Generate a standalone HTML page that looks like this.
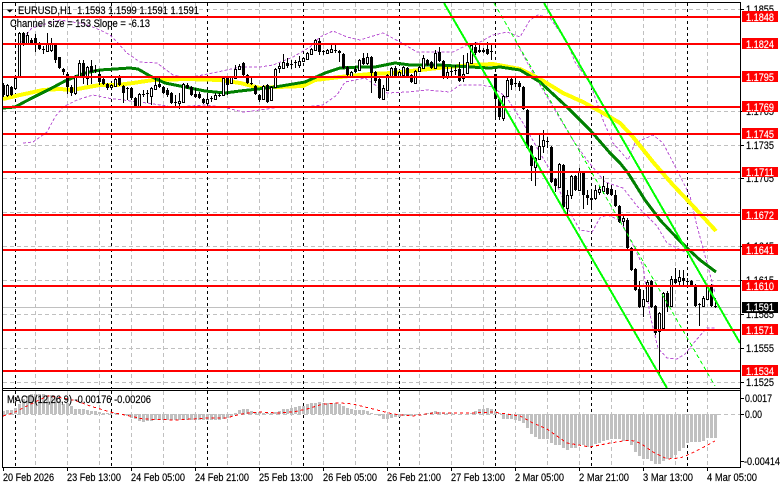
<!DOCTYPE html>
<html><head><meta charset="utf-8"><title>EURUSD,H1</title>
<style>
html,body{margin:0;padding:0;background:#fff;width:781px;height:489px;overflow:hidden}
svg{display:block;font-family:"Liberation Sans",sans-serif}
text{font-size:11px;fill:#000;stroke:#000;stroke-width:.18px}
.w text{fill:#fff;stroke:#fff}
</style></head><body>
<svg width="781" height="489" viewBox="0 0 781 489" xmlns="http://www.w3.org/2000/svg">
<rect width="781" height="489" fill="#fff"/>
<!-- grid -->
<path fill="none" stroke="#c0c0c0" stroke-width="1" stroke-dasharray="4 3" d="M3 9.5H740M3 43.5H740M3 77.5H740M3 111.5H740M3 145.5H740M3 178.5H740M3 212.5H740M3 246.5H740M3 280.5H740M3 314.5H740M3 348.5H740M3 382.5H740M3 414.5H740
M35.5 3V388M67.5 3V388M99.5 3V388M131.5 3V388M163.5 3V388M195.5 3V388M227.5 3V388M259.5 3V388M291.5 3V388M323.5 3V388M355.5 3V388M387.5 3V388M419.5 3V388M451.5 3V388M483.5 3V388M515.5 3V388M547.5 3V388M579.5 3V388M611.5 3V388M643.5 3V388M675.5 3V388M707.5 3V388
M35.5 391V468M67.5 391V468M99.5 391V468M131.5 391V468M163.5 391V468M195.5 391V468M227.5 391V468M259.5 391V468M291.5 391V468M323.5 391V468M355.5 391V468M387.5 391V468M419.5 391V468M451.5 391V468M483.5 391V468M515.5 391V468M547.5 391V468M579.5 391V468M611.5 391V468M643.5 391V468M675.5 391V468M707.5 391V468"/>
<path fill="none" stroke="#000" stroke-width="1" stroke-dasharray="3 3" d="M15.5 3V388M111.5 3V388M207.5 3V388M303.5 3V388M399.5 3V388M495.5 3V388M591.5 3V388M687.5 3V388M15.5 391V468M111.5 391V468M207.5 391V468M303.5 391V468M399.5 391V468M495.5 391V468M591.5 391V468M687.5 391V468"/>
<line x1="3" y1="307.5" x2="740" y2="307.5" stroke="#c0c0c0"/>
<!-- envelopes -->
<g fill="none" stroke="#ba55d3" stroke-width="1" stroke-dasharray="3 2" shape-rendering="crispEdges">
<path d="M18 52L24 37L32 28L45 24L60 20L85 24L100 30L110 35L117 42L127 53L140 62L157 63L173 75L187 78L213 73L240 67L260 67L273 65L293 57L310 47L320 37L333 31L347 37L360 40L383 33L400 42L417 52L433 52L453 52L467 45L480 42L493 35L507 32L520 37L530 20L538 15L550 18L567 42L575 62L590 83L603 120L613 143L628 160L635 143L653 135L663 143L677 170L690 196L697 226L707 263L715 293"/>
<path d="M23 143L33 142L47 132L55 117L63 107L77 100L93 95L107 98L123 100L147 103L173 107L207 105L227 108L243 112L260 110L280 107L303 107L323 105L337 95L345 82L365 78L387 93L407 92L427 90L450 92L460 85L480 85L493 87L507 98L523 123L540 153L550 170L567 207L580 230L592 232L600 218L607 215L620 220L633 245L643 266L650 315L658 348L667 358L677 359L685 354L697 339L707 328L715 328"/>
<path d="M515 40L533 73L553 107L573 140L587 160L605 182L623 188L637 206L657 226L667 243L685 252"/>
</g>
<!-- moving averages -->
<path fill="none" stroke="#ffff00" stroke-width="4" stroke-linejoin="round" shape-rendering="crispEdges" d="M3 99L20 95L43 90L60 89L72 90L83 88L100 85L117 85L133 83L153 80L187 79L220 80L240 83L260 88L277 87L303 86L315 80L340 77L370 74L393 73L420 70L447 67L473 65L493 64L520 69L540 79L563 93L583 102L603 113L620 123L633 137L653 162L673 185L693 206L716 231"/>
<path fill="none" stroke="#008000" stroke-width="3" stroke-linejoin="round" shape-rendering="crispEdges" d="M3 108L15 107L30 99L50 89L65 81L85 73L100 70L130 68L138 69L150 76L165 83L185 87L205 91L225 93L240 91L258 89L275 87L305 82L325 73L340 68L360 67L375 67L395 63L410 65L440 65L470 67L490 68L500 67L520 70L540 82L567 107L590 130L610 153L620 163L628 173L645 200L660 220L677 238L687 248L700 260L716 272"/>
<!-- wicks -->
<path fill="none" stroke="#000" stroke-width="1" d="M3.5 83V97M7.5 84V97M11.5 86V96M15.5 75V89M19.5 32V78M23.5 32V46M27.5 32V45M31.5 38V44M35.5 34V52M39.5 42V50M43.5 46V54M47.5 33V52M51.5 38V52M55.5 44V63M59.5 57V69M63.5 68V75M67.5 72V94M71.5 85V96M75.5 75V95M79.5 60V77M83.5 60V84M87.5 66V85M91.5 60V84M95.5 65V73M99.5 70V85M103.5 78V85M107.5 83V90M111.5 84V89M115.5 76V87M119.5 75V86M123.5 85V103M127.5 87V100M131.5 87V100M135.5 97V108M139.5 93V108M143.5 90V97M147.5 90V103M151.5 87V105M155.5 78V90M159.5 78V88M163.5 86V94M167.5 88V97M171.5 92V104M175.5 95V107M179.5 93V109M183.5 83V103M187.5 83V89M191.5 86V96M195.5 88V98M199.5 92V99M203.5 98V104M207.5 96V105M211.5 96V102M215.5 93V100M219.5 93V97M223.5 77V96M227.5 76V95M231.5 76V84M235.5 65V79M239.5 64V70M243.5 62V76M247.5 74V84M251.5 78V85M255.5 85V95M259.5 94V102M263.5 85V100M267.5 84V103M271.5 86V101M275.5 68V88M279.5 63V73M283.5 54V69M287.5 58V68M291.5 60V69M295.5 60V68M299.5 56V68M303.5 57V62M307.5 52V60M311.5 48V55M315.5 39V51M319.5 38V55M323.5 50V55M327.5 49V54M331.5 45V53M335.5 45V53M339.5 50V62M343.5 53V69M347.5 66V76M351.5 71V78M355.5 66V73M359.5 59V71M363.5 53V65M367.5 53V65M371.5 56V93M375.5 71V83M379.5 78V99M383.5 85V100M387.5 74V91M391.5 67V77M395.5 66V77M399.5 71V78M403.5 66V76M407.5 67V78M411.5 74V83M415.5 70V84M419.5 66V72M423.5 55V69M427.5 59V66M431.5 61V69M435.5 50V69M439.5 47V62M443.5 60V79M447.5 67V79M451.5 67V78M455.5 65V75M459.5 62V82M463.5 55V82M467.5 53V74M471.5 43V64M475.5 42V55M479.5 44V53M483.5 48V53M487.5 42V55M491.5 45V60M495.5 74V119M499.5 98V120M503.5 95V121M507.5 78V97M511.5 77V90M515.5 77V87M519.5 81V91M523.5 86V110M527.5 109V149M531.5 145V181M535.5 157V186M539.5 135V160M543.5 130V153M547.5 137V148M551.5 146V183M555.5 178V192M559.5 163V188M563.5 164V208M567.5 190V215M571.5 175V199M575.5 175V191M579.5 168V191M583.5 171V209M587.5 190V205M591.5 190V210M595.5 185V200M599.5 186V195M603.5 176V194M607.5 183V195M611.5 185V196M615.5 190V207M619.5 205V223M623.5 216V226M627.5 218V249M631.5 247V271M635.5 268V291M639.5 281V308M643.5 290V317M647.5 280V302M651.5 280V308M655.5 305V335M659.5 312V375M663.5 292V329M667.5 291V312M671.5 276V307M675.5 268V284M679.5 270V287M683.5 270V287M687.5 278V286M691.5 280V287M695.5 284V307M699.5 303V326M703.5 296V307M707.5 285V300M711.5 284V307M715.5 298V308"/>
<!-- black bodies -->
<path fill="none" stroke="#000" stroke-width="3" d="M3.5 85V95M11.5 87V95M23.5 33V45M31.5 40V43M35.5 38V45M39.5 44V49M43.5 49V50M55.5 45V60M59.5 57V68M63.5 69V72M67.5 74V87M71.5 87V93M83.5 63V78M91.5 66V72M95.5 70V71M99.5 74V82M103.5 79V84M107.5 84V88M119.5 77V85M123.5 86V93M127.5 88V89M131.5 88V98M135.5 98V107M143.5 94V95M147.5 93V94M159.5 84V87M163.5 87V93M167.5 90V95M171.5 93V103M175.5 102V103M187.5 85V88M191.5 87V95M195.5 94V97M199.5 94V98M203.5 99V103M211.5 98V99M219.5 95V96M227.5 78V85M243.5 63V75M247.5 75V83M251.5 83V84M255.5 86V94M259.5 95V100M267.5 85V102M287.5 63V66M291.5 64V65M295.5 62V63M319.5 41V52M323.5 51V52M335.5 50V51M339.5 51V53M343.5 54V68M347.5 67V75M355.5 69V72M363.5 58V64M371.5 57V73M375.5 72V81M379.5 79V98M395.5 68V76M407.5 68V77M411.5 75V82M427.5 60V65M431.5 62V68M439.5 52V61M443.5 61V78M451.5 71V72M455.5 70V71M459.5 69V81M475.5 47V53M479.5 50V52M483.5 50V52M487.5 49V54M491.5 51V52M495.5 74V99M499.5 99V117M511.5 79V85M515.5 83V84M519.5 83V87M523.5 87V109M527.5 110V148M531.5 146V166M547.5 141V142M551.5 147V182M555.5 179V186M563.5 165V207M575.5 176V190M583.5 172V195M587.5 195V198M591.5 198V200M607.5 188V194M611.5 189V195M615.5 195V206M619.5 206V222M627.5 220V248M631.5 248V270M635.5 269V290M639.5 289V307M651.5 281V307M655.5 306V333M667.5 293V307M675.5 279V283M683.5 278V281M687.5 281V282M691.5 281V285M695.5 285V306M699.5 304V305M711.5 286V306M715.5 306V307"/>
<!-- white bodies -->
<path fill="#fff" stroke="#000" stroke-width="1" d="M6.5 85.5h2v10h-2zM14.5 78.5h2v10h-2zM18.5 33.5h2v44h-2zM26.5 35.5h2v8h-2zM46.5 43.5h2v8h-2zM50.5 43.5h2v7h-2zM74.5 76.5h2v17h-2zM78.5 63.5h2v14h-2zM86.5 67.5h2v11h-2zM110.5 85.5h2v2h-2zM114.5 79.5h2v7h-2zM138.5 94.5h2v13h-2zM150.5 88.5h2v8h-2zM154.5 85.5h2v4h-2zM178.5 101.5h2v2h-2zM182.5 84.5h2v18h-2zM206.5 99.5h2v4h-2zM214.5 95.5h2v4h-2zM222.5 78.5h2v17h-2zM230.5 77.5h2v6h-2zM234.5 69.5h2v9h-2zM238.5 66.5h2v3h-2zM262.5 86.5h2v13h-2zM270.5 87.5h2v13h-2zM274.5 69.5h2v18h-2zM278.5 66.5h2v2h-2zM282.5 62.5h2v6h-2zM298.5 61.5h2v4h-2zM302.5 58.5h2v3h-2zM306.5 53.5h2v6h-2zM310.5 49.5h2v5h-2zM314.5 40.5h2v10h-2zM326.5 50.5h2v3h-2zM330.5 49.5h2v3h-2zM350.5 72.5h2v4h-2zM358.5 60.5h2v10h-2zM366.5 57.5h2v6h-2zM382.5 88.5h2v11h-2zM386.5 75.5h2v15h-2zM390.5 68.5h2v8h-2zM398.5 72.5h2v5h-2zM402.5 67.5h2v8h-2zM414.5 71.5h2v12h-2zM418.5 67.5h2v4h-2zM422.5 58.5h2v10h-2zM434.5 53.5h2v15h-2zM446.5 72.5h2v4h-2zM462.5 74.5h2v4h-2zM466.5 62.5h2v11h-2zM470.5 45.5h2v18h-2zM502.5 96.5h2v22h-2zM506.5 80.5h2v16h-2zM534.5 158.5h2v9h-2zM538.5 146.5h2v13h-2zM542.5 140.5h2v6h-2zM558.5 164.5h2v23h-2zM566.5 195.5h2v13h-2zM570.5 176.5h2v19h-2zM578.5 172.5h2v18h-2zM594.5 190.5h2v8h-2zM598.5 189.5h2v3h-2zM602.5 186.5h2v5h-2zM622.5 218.5h2v3h-2zM642.5 299.5h2v7h-2zM646.5 282.5h2v19h-2zM658.5 313.5h2v18h-2zM662.5 293.5h2v35h-2zM670.5 279.5h2v27h-2zM678.5 277.5h2v4h-2zM702.5 298.5h2v8h-2zM706.5 287.5h2v12h-2z"/>
<!-- channel -->
<path fill="none" stroke="#00ff00" stroke-width="2" shape-rendering="crispEdges" d="M444 3L667 388M544 3L740 343"/>
<path fill="none" stroke="#00ff00" stroke-width="1" stroke-dasharray="4 3" shape-rendering="crispEdges" d="M494 3L715 386"/>
<!-- levels -->
<path fill="none" stroke="#ff0000" stroke-width="2" d="M3 17H741M3 44H741M3 77H741M3 107H741M3 134H741M3 172H741M3 215H741M3 250H741M3 286H741M3 330H741M3 371H741"/>
<!-- macd histogram -->
<path fill="none" stroke="#c0c0c0" stroke-width="3" d="M3.5 411V414M7.5 410V414M11.5 410V414M15.5 408V414M19.5 404V414M23.5 399V414M27.5 396V414M31.5 394V414M35.5 394V414M39.5 394V414M43.5 394V414M47.5 395V414M51.5 395V414M55.5 398V414M59.5 401V414M63.5 404V414M67.5 403V414M71.5 406V414M75.5 409V414M79.5 409V414M83.5 409V414M87.5 410V414M91.5 411V414M95.5 411V414M99.5 412V414M103.5 413V414M107.5 413V414M111.5 413V414M115.5 413V414M123.5 414V415M127.5 414V416M131.5 414V418M135.5 414V419M139.5 414V421M143.5 414V422M147.5 414V421M151.5 414V421M155.5 414V420M159.5 414V420M163.5 414V420M167.5 414V420M171.5 414V420M175.5 414V420M179.5 414V420M183.5 414V420M187.5 414V420M191.5 414V420M195.5 414V420M199.5 414V420M203.5 414V420M207.5 414V420M211.5 414V420M215.5 414V420M219.5 414V420M223.5 414V419M227.5 414V418M231.5 414V416M235.5 413V414M239.5 410V414M243.5 409V414M247.5 409V414M251.5 411V414M255.5 412V414M259.5 412V414M263.5 413V414M267.5 413V414M271.5 413V414M275.5 412V414M279.5 411V414M283.5 409V414M287.5 409V414M291.5 408V414M295.5 407V414M299.5 406V414M303.5 406V414M307.5 404V414M311.5 403V414M315.5 403V414M319.5 402V414M323.5 403V414M327.5 403V414M331.5 403V414M335.5 403V414M339.5 404V414M343.5 406V414M347.5 408V414M351.5 409V414M355.5 410V414M359.5 410V414M363.5 410V414M367.5 411V414M371.5 413V414M379.5 414V416M383.5 414V419M387.5 414V419M391.5 414V418M395.5 414V417M399.5 414V417M403.5 414V416M407.5 414V415M411.5 414V416M415.5 414V415M419.5 414V415M427.5 413V414M431.5 412V414M435.5 411V414M439.5 412V414M443.5 413V414M447.5 413V414M451.5 413V414M471.5 413V414M475.5 411V414M479.5 409V414M483.5 409V414M487.5 408V414M491.5 409V414M495.5 411V414M499.5 413V414M503.5 414V419M507.5 414V419M511.5 414V419M515.5 414V420M519.5 414V421M523.5 414V423M527.5 414V428M531.5 414V434M535.5 414V437M539.5 414V439M543.5 414V439M547.5 414V439M551.5 414V443M555.5 414V445M559.5 414V445M563.5 414V448M567.5 414V450M571.5 414V448M575.5 414V448M579.5 414V445M583.5 414V445M587.5 414V447M591.5 414V447M595.5 414V444M599.5 414V443M603.5 414V441M607.5 414V440M611.5 414V439M615.5 414V439M619.5 414V439M623.5 414V441M627.5 414V441M631.5 414V445M635.5 414V452M639.5 414V456M643.5 414V459M647.5 414V459M651.5 414V461M655.5 414V464M659.5 414V464M663.5 414V461M667.5 414V459M671.5 414V458M675.5 414V455M679.5 414V451M683.5 414V448M687.5 414V443M691.5 414V442M695.5 414V442M699.5 414V442M703.5 414V441M707.5 414V438M711.5 414V438M715.5 414V438"/>
<path fill="none" stroke="#ff0000" stroke-width="1" stroke-dasharray="3 3" shape-rendering="crispEdges" d="M3 416L13 413L23 408L37 401L48 396L63 398L77 401L90 406L110 412L130 416L143 419L177 420L207 418L227 418L233 416L247 413L260 412L277 413L293 412L307 409L323 404L340 403L353 404L373 409L393 414L413 416L433 413L447 413L473 413L493 412L520 416L533 423L547 429L567 443L590 447L610 443L630 440L640 443L653 452L667 459L680 458L690 454L702 448L715 441"/>
<!-- frame -->
<path fill="none" stroke="#000" stroke-width="1" d="M2.5 2.5H740.5V467.5H2.5ZM2.5 388.5H740.5M2.5 390.5H740.5"/>
<path fill="none" stroke="#000" stroke-width="1" d="M740 9.5h4M740 111.5h4M740 145.5h4M740 178.5h4M740 246.5h4M740 280.5h4M740 314.5h4M740 348.5h4M740 382.5h4M740 398.5h4M740 414.5h4M740 461.5h4M3.5 468v3M67.5 468v3M131.5 468v3M195.5 468v3M259.5 468v3M323.5 468v3M387.5 468v3M451.5 468v3M515.5 468v3M579.5 468v3M643.5 468v3M707.5 468v3"/>
<!-- axis labels -->
<text x="746" y="13" textLength="28" lengthAdjust="spacingAndGlyphs">1.1855</text>
<text x="746" y="115" textLength="28" lengthAdjust="spacingAndGlyphs">1.1765</text>
<text x="746" y="149" textLength="28" lengthAdjust="spacingAndGlyphs">1.1735</text>
<text x="746" y="182" textLength="28" lengthAdjust="spacingAndGlyphs">1.1705</text>
<text x="746" y="250" textLength="28" lengthAdjust="spacingAndGlyphs">1.1645</text>
<text x="746" y="284" textLength="28" lengthAdjust="spacingAndGlyphs">1.1615</text>
<text x="746" y="318" textLength="28" lengthAdjust="spacingAndGlyphs">1.1585</text>
<text x="746" y="352" textLength="28" lengthAdjust="spacingAndGlyphs">1.1555</text>
<text x="746" y="386" textLength="28" lengthAdjust="spacingAndGlyphs">1.1525</text>
<text x="745" y="402" textLength="27" lengthAdjust="spacingAndGlyphs">0.0017</text>
<text x="745" y="418" textLength="17" lengthAdjust="spacingAndGlyphs">0.00</text>
<text x="744" y="465" textLength="36" lengthAdjust="spacingAndGlyphs">-0.00414</text>
<g fill="#ff0000">
<rect x="742" y="11" width="36" height="11"/><rect x="742" y="38" width="36" height="11"/><rect x="742" y="71" width="36" height="11"/><rect x="742" y="101" width="36" height="11"/><rect x="742" y="128" width="36" height="11"/><rect x="742" y="167" width="36" height="10"/><rect x="742" y="209" width="36" height="11"/><rect x="742" y="244" width="36" height="11"/><rect x="742" y="280" width="36" height="11"/><rect x="742" y="324" width="36" height="11"/><rect x="742" y="365" width="36" height="11"/>
</g>
<rect x="742" y="302" width="36" height="11" fill="#000"/>
<g class="w">
<text x="746" y="21" textLength="28" lengthAdjust="spacingAndGlyphs">1.1848</text>
<text x="746" y="48" textLength="28" lengthAdjust="spacingAndGlyphs">1.1824</text>
<text x="746" y="81" textLength="28" lengthAdjust="spacingAndGlyphs">1.1795</text>
<text x="746" y="111" textLength="28" lengthAdjust="spacingAndGlyphs">1.1769</text>
<text x="746" y="138" textLength="28" lengthAdjust="spacingAndGlyphs">1.1745</text>
<text x="746" y="176" textLength="28" lengthAdjust="spacingAndGlyphs">1.1711</text>
<text x="746" y="219" textLength="28" lengthAdjust="spacingAndGlyphs">1.1672</text>
<text x="746" y="254" textLength="28" lengthAdjust="spacingAndGlyphs">1.1641</text>
<text x="746" y="290" textLength="28" lengthAdjust="spacingAndGlyphs">1.1610</text>
<text x="746" y="311" textLength="28" lengthAdjust="spacingAndGlyphs">1.1591</text>
<text x="746" y="334" textLength="28" lengthAdjust="spacingAndGlyphs">1.1571</text>
<text x="746" y="375" textLength="28" lengthAdjust="spacingAndGlyphs">1.1534</text>
</g>
<!-- date labels -->
<text x="3" y="481" textLength="51" lengthAdjust="spacingAndGlyphs">20 Feb 2026</text>
<text x="67" y="481" textLength="54" lengthAdjust="spacingAndGlyphs">23 Feb 13:00</text>
<text x="131" y="481" textLength="54" lengthAdjust="spacingAndGlyphs">24 Feb 05:00</text>
<text x="195" y="481" textLength="54" lengthAdjust="spacingAndGlyphs">24 Feb 21:00</text>
<text x="259" y="481" textLength="54" lengthAdjust="spacingAndGlyphs">25 Feb 13:00</text>
<text x="323" y="481" textLength="54" lengthAdjust="spacingAndGlyphs">26 Feb 05:00</text>
<text x="387" y="481" textLength="54" lengthAdjust="spacingAndGlyphs">26 Feb 21:00</text>
<text x="451" y="481" textLength="54" lengthAdjust="spacingAndGlyphs">27 Feb 13:00</text>
<text x="515" y="481" textLength="49" lengthAdjust="spacingAndGlyphs">2 Mar 05:00</text>
<text x="579" y="481" textLength="50" lengthAdjust="spacingAndGlyphs">2 Mar 21:00</text>
<text x="643" y="481" textLength="50" lengthAdjust="spacingAndGlyphs">3 Mar 13:00</text>
<text x="707" y="481" textLength="50" lengthAdjust="spacingAndGlyphs">4 Mar 05:00</text>
<!-- chart captions -->
<path d="M6.5 9.5h6.5l-3.2 3z" fill="#000"/>
<text x="18" y="14" textLength="181" lengthAdjust="spacingAndGlyphs" xml:space="preserve">EURUSD,H1  1.1593 1.1599 1.1591 1.1591</text>
<text x="10" y="27" textLength="140" lengthAdjust="spacingAndGlyphs">Channel size = 153 Slope = -6.13</text>
<text x="7" y="403" textLength="144" lengthAdjust="spacingAndGlyphs">MACD(12,26,9) -0.00176 -0.00206</text>
</svg>
</body></html>
